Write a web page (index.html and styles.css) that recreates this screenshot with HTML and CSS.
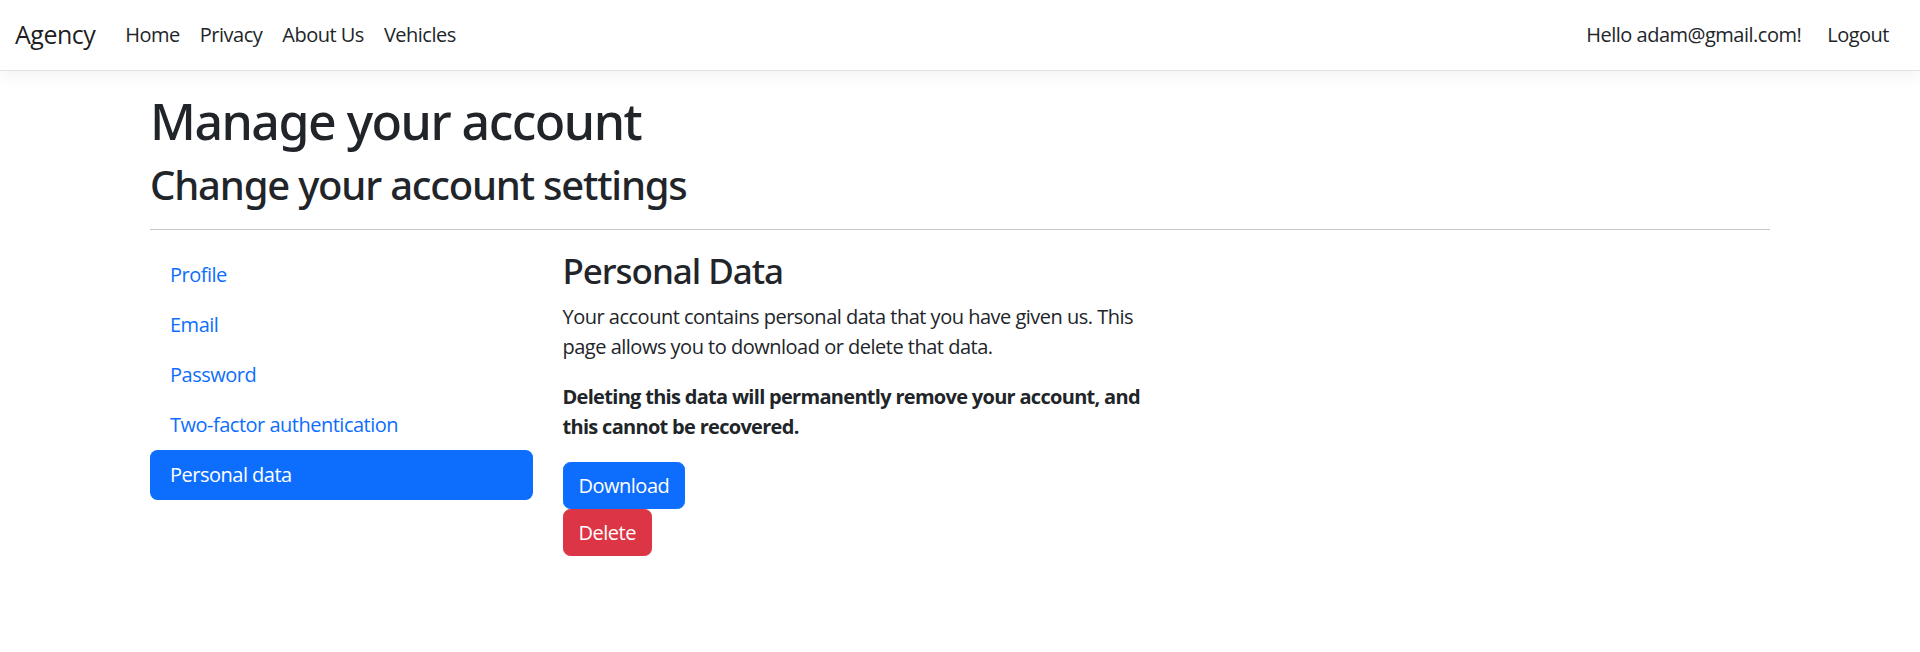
FILE: index.html
```html
<!DOCTYPE html>
<html lang="en">
<head>
<meta charset="utf-8">
<title>Personal Data - Agency</title>
<link rel="stylesheet" href="styles.css">
</head>
<body>
<header>
  <nav class="navbar">
    <div class="navbar-inner">
      <a class="brand" href="#">Agency</a>
      <div class="navbar-collapse">
        <ul class="nav-main">
          <li><a class="nav-link" href="#">Home</a></li>
          <li><a class="nav-link" href="#">Privacy</a></li>
          <li><a class="nav-link" href="#">About Us</a></li>
          <li><a class="nav-link" href="#">Vehicles</a></li>
        </ul>
        <ul class="nav-user">
          <li><a class="nav-link" href="#">Hello adam@gmail.com!</a></li>
          <li><form class="logout-form"><button type="button" class="btn btn-link">Logout</button></form></li>
        </ul>
      </div>
    </div>
  </nav>
</header>
<div class="container">
  <main class="main">
    <h1>Manage your account</h1>
    <div>
      <h2>Change your account settings</h2>
      <hr>
      <div class="row">
        <div class="col-nav">
          <ul class="pills">
            <li><a class="pill-link" href="#">Profile</a></li>
            <li><a class="pill-link" href="#">Email</a></li>
            <li><a class="pill-link" href="#">Password</a></li>
            <li><a class="pill-link" href="#">Two-factor authentication</a></li>
            <li><a class="pill-link active" href="#">Personal data</a></li>
          </ul>
        </div>
        <div class="col-content">
          <h3>Personal Data</h3>
          <div class="inner-row">
            <div class="col-half">
              <p>Your account contains personal data that you have given us. This page allows you to download or delete that data.</p>
              <p><strong>Deleting this data will permanently remove your account, and this cannot be recovered.</strong></p>
              <form class="download-form">
                <button type="button" class="btn btn-primary">Download</button>
              </form>
              <p><a class="btn btn-danger" href="#">Delete</a></p>
            </div>
          </div>
        </div>
      </div>
    </div>
  </main>
</div>
</body>
</html>
```

FILE: styles.css
```css
html {
  font-size: 20px;
}

body {
  margin: 0;
  font-family: "Open Sans", "Noto Sans", "Liberation Sans", sans-serif;
  font-size: 1rem;
  line-height: 1.5;
  color: #212529;
  background: #fff;
  letter-spacing: -0.025em;
}

a {
  text-decoration: none;
}

ul {
  list-style: none;
  margin: 0;
  padding: 0;
}

/* navbar */
.navbar {
  background: #fff;
  border-bottom: 1px solid #dee2e6;
  box-shadow: 0 0.25rem 0.75rem rgba(0, 0, 0, 0.05);
  padding: 0.5rem 0;
  margin-bottom: 1rem;
}

.navbar-inner {
  display: flex;
  align-items: center;
  padding: 0 0.75rem;
}

.brand {
  font-size: 1.25rem;
  padding: 0.3125rem 0;
  margin-right: 1rem;
  color: rgba(0, 0, 0, 0.9);
  white-space: nowrap;
}

.navbar-collapse {
  flex: 1;
  display: flex;
  align-items: center;
  justify-content: space-between;
}

.nav-main,
.nav-user {
  display: flex;
  align-items: center;
}

.nav-link {
  display: block;
  padding: 0.5rem;
  color: #212529;
}

.logout-form {
  margin: 0;
}

.btn {
  display: inline-block;
  font-family: inherit;
  font-size: 1rem;
  font-weight: 400;
  line-height: 1.5;
  letter-spacing: inherit;
  padding: 0.375rem 0.75rem;
  border: 1px solid transparent;
  border-radius: 0.375rem;
  text-align: center;
  cursor: pointer;
  background: transparent;
}

.btn-link {
  color: #212529;
}

.btn-primary {
  color: #fff;
  background: #0d6efd;
  border-color: #0d6efd;
}

.btn-danger {
  color: #fff;
  background: #dc3545;
  border-color: #dc3545;
}

/* page */
.container {
  box-sizing: border-box;
  max-width: 1650px;
  margin: 0 auto;
  padding: 0 0.75rem;
}

.main {
  padding-bottom: 1rem;
}

h1, h2, h3 {
  margin: 0 0 0.5rem;
  font-family: "Noto Sans", "Open Sans", sans-serif;
  font-weight: 500;
  line-height: 1.2;
  letter-spacing: -0.03em;
}

h1 {
  font-size: 2.5rem;
}

h2 {
  font-size: 2rem;
}

h3 {
  font-size: 1.75rem;
}

hr {
  margin: 1rem 0;
  border: 0;
  border-top: 1px solid #c8c9ca;
}

p {
  margin: 0 0 1rem;
}

strong {
  font-weight: 700;
  letter-spacing: -0.035em;
}

.row {
  display: flex;
  margin: 0 -0.75rem;
}

.col-nav {
  width: 25%;
  padding: 0 0.75rem;
  box-sizing: border-box;
}

.col-content {
  width: 75%;
  padding: 0 0.75rem;
  box-sizing: border-box;
}

.pills {
  display: flex;
  flex-direction: column;
}

.pill-link {
  display: block;
  padding: 0.5rem 1rem;
  color: #0d6efd;
  border-radius: 0.375rem;
}

.pill-link.active {
  color: #fff;
  background: #0d6efd;
}

.inner-row {
  display: flex;
  margin: 0 -0.75rem;
}

.col-half {
  width: 50%;
  padding: 0 0.75rem;
  box-sizing: border-box;
}

.download-form {
  margin: 0;
}
```
